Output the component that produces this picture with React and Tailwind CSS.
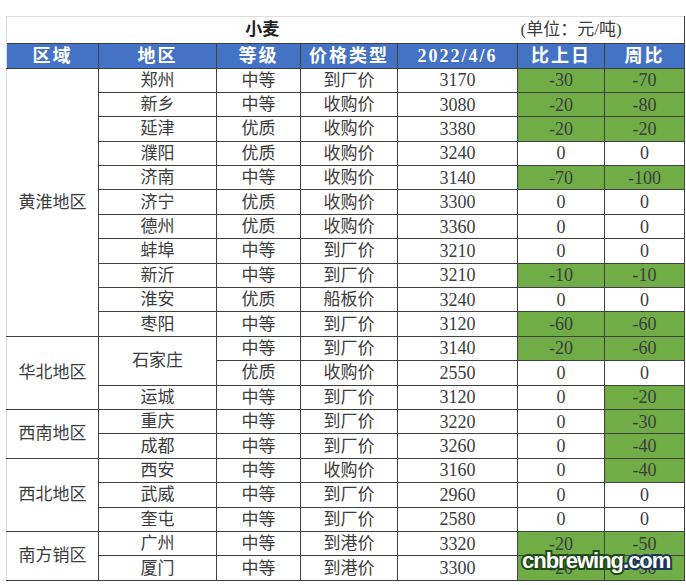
import React from "react";

const green = "bg-[#70ad47]";

const groups = [
  {
    area: "黄淮地区",
    rows: [
      ["郑州", "中等", "到厂价", "3170", "-30", "-70", 1, 1],
      ["新乡", "中等", "收购价", "3080", "-20", "-80", 1, 1],
      ["延津", "优质", "收购价", "3380", "-20", "-20", 1, 1],
      ["濮阳", "优质", "收购价", "3240", "0", "0", 0, 0],
      ["济南", "中等", "收购价", "3140", "-70", "-100", 1, 1],
      ["济宁", "优质", "收购价", "3300", "0", "0", 0, 0],
      ["德州", "优质", "收购价", "3360", "0", "0", 0, 0],
      ["蚌埠", "中等", "到厂价", "3210", "0", "0", 0, 0],
      ["新沂", "中等", "到厂价", "3210", "-10", "-10", 1, 1],
      ["淮安", "优质", "船板价", "3240", "0", "0", 0, 0],
      ["枣阳", "中等", "到厂价", "3120", "-60", "-60", 1, 1],
    ],
  },
  {
    area: "华北地区",
    rows: [
      ["石家庄", "中等", "到厂价", "3140", "-20", "-60", 1, 1, 2],
      [null, "优质", "收购价", "2550", "0", "0", 0, 0],
      ["运城", "中等", "到厂价", "3120", "0", "-20", 0, 1],
    ],
  },
  {
    area: "西南地区",
    rows: [
      ["重庆", "中等", "到厂价", "3220", "0", "-30", 0, 1],
      ["成都", "中等", "到厂价", "3260", "0", "-40", 0, 1],
    ],
  },
  {
    area: "西北地区",
    rows: [
      ["西安", "中等", "收购价", "3160", "0", "-40", 0, 1],
      ["武威", "中等", "到厂价", "2960", "0", "0", 0, 0],
      ["奎屯", "中等", "到厂价", "2580", "0", "0", 0, 0],
    ],
  },
  {
    area: "南方销区",
    rows: [
      ["广州", "中等", "到港价", "3320", "-20", "-50", 1, 1],
      ["厦门", "中等", "到港价", "3300", "-20", "-50", 1, 1],
    ],
  },
];

const cell = "border border-[#404040] text-center p-0 leading-none";

export default function App() {
  return (
    <div className="w-[686px] h-[585px] bg-white pt-[16px] pl-[6px] relative overflow-hidden font-['Liberation_Serif','Noto_Sans_CJK_SC',serif] text-[#3c3c3c]">
      <table className="table-fixed border-collapse w-[678px]">
        <colgroup>
          <col className="w-[92px]" />
          <col className="w-[118px]" />
          <col className="w-[84px]" />
          <col className="w-[97px]" />
          <col className="w-[120px]" />
          <col className="w-[87px]" />
          <col className="w-[80px]" />
        </colgroup>
        <tbody>
          <tr className="h-[23px]">
            <td colSpan={5} className="border-t border-l border-[#dcdcdc] text-center text-[17px] font-bold text-[#222] p-0">小麦</td>
            <td colSpan={2} className="border-t border-[#dcdcdc] border-r-[#404040] border-r text-left pl-[3px] text-[17px] p-0">(单位：元/吨)</td>
          </tr>
          <tr className="h-[25px] bg-[#4472c4] text-white font-bold text-[18px]">
            {["区域", "地区", "等级", "价格类型", "2022/4/6", "比上日", "周比"].map((h, i) => (
              <td key={h} className={`${cell} ${i === 0 ? "border-l-[#dcdcdc]" : ""} tracking-[2px]`}>{h}</td>
            ))}
          </tr>
          {groups.map((g) =>
            g.rows.map((r, i) => (
              <tr key={g.area + i} className="h-[24.4px] text-[17px]">
                {i === 0 && (
                  <td rowSpan={g.rows.length} className={`${cell} border-l-[#dcdcdc] text-[17px]`}>{g.area}</td>
                )}
                {r[0] !== null && (
                  <td rowSpan={r[8] || 1} className={cell}>{r[0]}</td>
                )}
                <td className={cell}>{r[1]}</td>
                <td className={cell}>{r[2]}</td>
                <td className={`${cell} text-[18px]`}>{r[3]}</td>
                <td className={`${cell} text-[18px] ${r[6] ? green : ""}`}>{r[4]}</td>
                <td className={`${cell} text-[18px] ${r[7] ? green : ""}`}>{r[5]}</td>
              </tr>
            ))
          )}
        </tbody>
      </table>
      <div className="absolute left-[522px] top-[550px] text-[22px] leading-none font-black tracking-[-1px] text-white font-['Liberation_Sans',sans-serif] [-webkit-text-stroke:4px_#1e4a16] [paint-order:stroke_fill]">
        cnbrewing<span className="[-webkit-text-stroke:4px_#1d3557]">.com</span>
      </div>
    </div>
  );
}
